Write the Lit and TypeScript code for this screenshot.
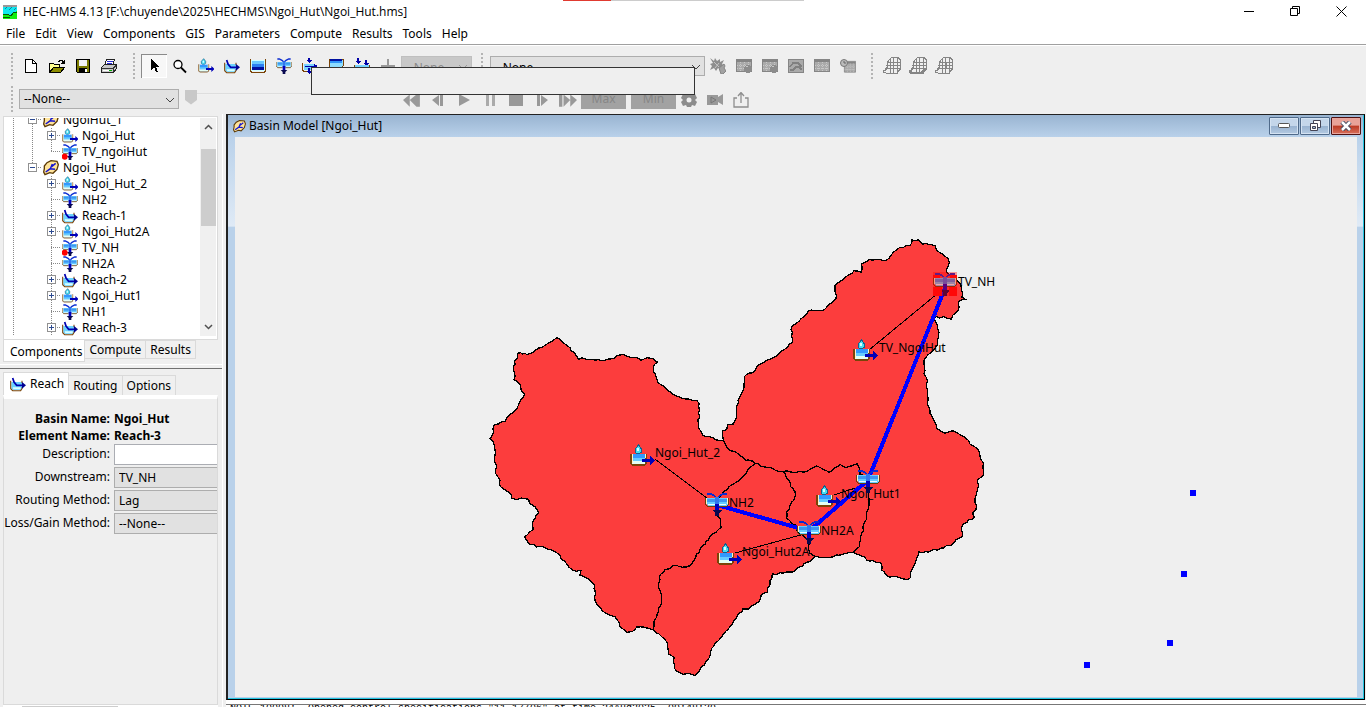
import { LitElement, html, svg, css, nothing } from "lit";
import { customElement } from "lit/decorators.js";

type Pt = [number, number];

/* ---------- shared glyphs, drawn on a 24 unit grid ---------- */

const junction = () => svg`
  <path d="M1 6v6l2 2h7V6z" fill="#66ccff"/><path d="M2 7h8v3H2z" fill="#3c96f0"/>
  <path d="M14 6v8h7l2-2V6z" fill="#66ccff"/><path d="M14 7h8v3h-8z" fill="#3c96f0"/>
  <path d="M3 12h7v1H3zM14 12h7v1h-7z" fill="#e8ffff"/>
  <path d="M.5 6v6.500l2 2H10M23.500 6v6.500l-2 2H14" fill="none" stroke="#6b3d08" stroke-width="1.200"/>
  <path d="M1.500 6v6M22.500 6v6" stroke="#fff2c8" fill="none"/>
  <path d="M2 1.500h3l4 2 3 3 3-3 4-2h3" fill="none" stroke="#0a2ad0" stroke-width="2"/>
  <path d="M10 5h4v9h-4z" fill="#3078f0"/><path d="M10 12h4v7h-4z" fill="#0000c0"/>
  <path d="M7 18h10l-3 3v3h-4v-3z" fill="#080850"/>`;

const subbasin = () => svg`
  <path d="M8.500 1l3 4v3l-2 1.500h-3L5 8V5z" fill="#48dcf0" stroke="#14608c"/><path d="M7 4h2v3H7z" fill="#d8ffff"/>
  <path d="M2 10h13v10H2z" fill="#3399ff"/><path d="M2 14h13v3H2z" fill="#66ccff"/><path d="M2 17h13v3H2z" fill="#e4fff4"/>
  <path d="M1 9.500v10l1.500 1.500h12l1.500-1.500v-10" fill="none" stroke="#7a4408" stroke-width="1.200"/>
  <path d="M2 10v9M15 10v4" stroke="#fff2c8"/>
  <path d="M12 15h8v-3l5 4.500-5 4.500v-3h-8z" fill="#0000b8"/>`;

const reach = () => svg`
  <path d="M2 9h16v9l-2 3H5l-3-2z" fill="#6cd2ff"/><path d="M4 17h12v3H5z" fill="#d8ffff"/>
  <path d="M1 7v12l3 3h12l2-3v-2M18 11V7" fill="none" stroke="#7a4408" stroke-width="1.600"/>
  <path d="M4 3l2 6 4 5h10" fill="none" stroke="#0000b0" stroke-width="2.600"/>
  <path d="M18 9l6 5-6 5z" fill="#000090"/>`;

const basinGlyph = () => svg`
  <path d="M2 9l4-5 6-3 9 1 2 5-2 7-6 6-5-1-7 3-2-4 1-5z" fill="#ffe49a" stroke="#5c3a06" stroke-width="2"/>
  <path d="M4 18l7-5 3-7M11 13l7 1M13 10l6-5" stroke="#1414d0" stroke-width="2.200" fill="none"/>`;

const gage = () => svg`${junction()}<circle cx="4" cy="19" r="4.500" fill="#ff0000"/>`;

const glyph24 = (body: unknown, size = 16) =>
  html`<svg width=${size} height=${size} viewBox="0 0 24 24" aria-hidden="true">${body}</svg>`;

const glyph16 = (body: unknown, crisp = true, size = 16) =>
  html`<svg width=${size} height=${size} viewBox="0 0 16 16" aria-hidden="true"
    shape-rendering=${crisp ? "crispEdges" : "auto"}>${body}</svg>`;

/* ---------- toolbar pictures, 16 unit grid ---------- */

const icons = {
  create: svg`<path d="M2.500 1.500h7l4 4v9h-11z" fill="#fff" stroke="#000"/><path d="M9.500 1.500v4h4" fill="none" stroke="#000"/>`,
  open: svg`<path d="M.5 13.500v-8h4l1 1h5v3" fill="#ffff90" stroke="#000"/><path d="M.5 14.500l4-5h11l-4 5z" fill="#8c8c00" stroke="#000"/><path d="M9 3.500h1v-1h3v1h1v2M12 5.500h4M13 4.500h3M15.500 2v3" fill="none" stroke="#000"/>`,
  save: svg`<path d="M1.500 1.500h13v13h-12l-1-1z" fill="#7c7c00" stroke="#000"/><path d="M4 2h8v6H4z" fill="#f4f4f4"/><path d="M4 10h8v5H4z" fill="#000"/><path d="M10 11h2v3h-2z" fill="#fff"/>`,
  print: svg`<path d="M5.500 1.500h8l-2 6h-8z" fill="#fff" stroke="#222"/><path d="M6 3h6M6 5h5" stroke="#2828d8"/><path d="M.5 9.500l3-3h12v4l-3 4H.5z" fill="#c8c8c8" stroke="#222"/><path d="M1 10.500h11l3-3M12.500 10v4" stroke="#333" fill="none"/><path d="M2 12h9v1H2z" fill="#fff"/><path d="M8 12h3v1H8z" fill="#00b000"/>`,
  arrow: svg`<path d="M5 1v11l3-3 2 5h2l-2-5h3z" fill="#000"/>`,
  zoom: svg`<circle cx="6" cy="6.500" r="4" fill="#fff" stroke="#000" stroke-width="1.300"/><path d="M9 9.500l5 5" stroke="#000" stroke-width="1.800"/>`,
  reservoir: svg`<path d="M1 2h14v11H1z" fill="#d0ffff"/><path d="M2 3h12v3H2z" fill="#68c8ff"/><path d="M2 6h12v3H2z" fill="#2c80f0"/><path d="M2 9h12v3H2z" fill="#0010a0"/><path d="M.5 1v12l1 1h13l1-1V1" fill="none" stroke="#7a4408"/>`,
  diversion: svg`<path d="M2 6h11v6H2z" fill="#78d4ff"/><path d="M.5 5v7l1 1h3M10 13h3" fill="none" stroke="#7a4408"/><path d="M6 0v2H4l3 3 3-3H8V0zM3 8h9V6l4 2-4 3V9H3zM6 10v3H4l3 3 3-3H8v-3z" fill="#0000a8"/>`,
  source: svg`<path d="M1 1h14v7l-2 2H3L1 8z" fill="#8cdcff" stroke="#7a4408"/><path d="M2 1h12v2H2z" fill="#0010a0"/><path d="M2 3h12v2H2z" fill="#3094f8"/><path d="M7 9h2v5H7z" fill="#0000a8"/>`,
  sink: svg`<path d="M3 0h2v3h2L4 6 1 3h2zM11 2h2v3h2l-3 3-3-3h2z" fill="#0000a8"/><path d="M.5 7v6l2 1h11l2-1V7" fill="#78d4ff" stroke="#7a4408"/>`,
  plus: svg`<path d="M7 1h2v6h6v3H9v5H7v-5H1V7h6z" fill="#999"/>`,
  burst: svg`<path d="M0 0l4 3 1-3 2 3 3-2v3l4-2-2 4 2 2-3 1 1 2-4-1-2 3-2-3-4 2 2-4-2-2 3-1z" fill="#8e8e8e"/><path d="M4 4l6 6M9 5l-4 5" stroke="#c4c4c4"/><path d="M9 10l5-4 1 2-1 2 2 3-3 3h-2z" fill="#a2a2a2" stroke="#858585"/>`,
  table: svg`<path d="M.5 1.500h15v12H.5z" fill="#aaa" stroke="#858585"/><path d="M1 3h14" stroke="#858585" stroke-width="2"/><path d="M1 7.500h14M1 10.500h14M4.500 4v9M8.500 4v9M12.500 4v9" stroke="#c8c8c8" stroke-dasharray="1 1"/>`,
  graph: svg`<path d="M.5 1.500h15v13H.5z" fill="#aaa" stroke="#858585"/><path d="M2 9l3-4h5l4 4M2 12h3l3-3h3l3 3" stroke="#808080" fill="none" stroke-width="1.500"/>`,
  mesh: svg`<path d="M4.500 3.500l3-3h6l2 2v8l-3 4h-9l-3-1v-1l2-1 1-2z" fill="none" stroke="#858585"/><path d="M6.500 2v12M9.500 1v13M12.500 1v13M4 4.500h12M3 7.500h12M2 10.500h13" stroke="#858585"/>`,
  first: svg`<path d="M6 3L0 8l6 6zM12 3L6 8l6 6zM12 3h3v11h-3z" fill="#999"/>`,
  back: svg`<path d="M9 3L2 8l7 6zM10 3h3v11h-3z" fill="#999"/>`,
  play: svg`<path d="M3 2l11 6-11 6z" fill="#999"/>`,
  pause: svg`<path d="M4 2h3v12H4zM10 2h3v12h-3z" fill="#aaa"/>`,
  stop: svg`<path d="M1 1h14v13H1z" fill="#999"/>`,
  next: svg`<path d="M3 3h3v11H3zM7 3l7 5-7 6z" fill="#999"/>`,
  last: svg`<path d="M0 3h3v11H0zM4 3l6 5-6 6zM10 3l6 5-6 6z" fill="#999"/>`,
  gear: svg`<path d="M6 1h4l1 2 3-1 2 4-2 2 2 2-2 4-3-1-1 2H6l-1-2-3 1-2-4 2-2-2-2 2-4 3 1z" fill="#8c8c8c"/><circle cx="8" cy="8" r="2.500" fill="#efefef"/>`,
  camera: svg`<path d="M0 3h11v2l5-3v11l-5-3v3H0z" fill="#999"/><path d="M4 5l5 3-5 3z" fill="none" stroke="#777"/>`,
  share: svg`<path d="M4 6H1v9h14V6h-3" fill="none" stroke="#8e8e8e" stroke-width="1.300"/><path d="M8 11V1M5 4l3-3.500L11 4" fill="none" stroke="#8e8e8e" stroke-width="1.300"/>`,
};
const tableBall = svg`${icons.table}<circle cx="12" cy="11" r="4" fill="#8c8c8c"/><path d="M10 9l2-1" stroke="#c8c8c8"/>`;
const tableClock = svg`<g transform="translate(4 2) scale(.75 .9)">${icons.table}</g><circle cx="4" cy="5" r="3.500" fill="#bbb" stroke="#777"/><path d="M4 3v2h2" stroke="#666" fill="none"/>`;
const meshLow = svg`${icons.mesh}<path d="M0 12l2 2h9l3-3" fill="none" stroke="#858585" stroke-width="2"/>`;
const meshPlus = svg`${icons.mesh}<path d="M9 5h2v6H9z" fill="#858585"/>`;

/* ---------- watershed geometry: each run is an origin plus points in thirds ---------- */

const run = (ox: number, oy: number, flat: number[]): Pt[] => {
  const out: Pt[] = [];
  for (let i = 0; i < flat.length; i += 2) out.push([ox + flat[i] / 3, oy + flat[i + 1] / 3]);
  return out;
};

/* Breaks long segments into short steps so that divides look surveyed. */
const ragged = (pts: Pt[]): string => {
  const out: string[] = [];
  let seed = 7;
  const wob = () => {
    seed = (seed * 1103515245 + 12345) % 2147483648;
    return (seed / 2147483648 - 0.5) * 2;
  };
  pts.forEach(([x, y], i) => {
    out.push(`${x.toFixed(1)},${y.toFixed(1)}`);
    const next = pts[i + 1];
    if (!next) return;
    const steps = Math.floor(Math.hypot(next[0] - x, next[1] - y) / 3);
    for (let s = 1; s < steps; s++) {
      const t = s / steps;
      out.push(`${(x + (next[0] - x) * t + wob()).toFixed(1)},${(y + (next[1] - y) * t + wob()).toFixed(1)}`);
    }
  });
  return out.join(" ");
};

const outline = ragged([
  ...run(480, 320, [113,100,122,98,126,102,136,100,140,104,156,99,176,84,205,70,218,62,230,53,240,58,250,68,270,83,283,97,296,118,306,113,322,119,345,121,376,121,385,117,400,116,412,107,428,103,442,109,460,112,484,121,500,113,518,116,532,126,524,133,520,142,527,165,531,180,545,195,560,208,585,226,600,232,618,237,650,241,657,250,656,280,659,292,653,300,655,318,668,345,690,350,708,360,728,361]),
  ...run(710, 220, [40,660,38,633,50,628,53,614,70,612,80,590,80,560,90,530,102,500,103,470,135,453,142,437,180,418,200,407,220,390,246,368,246,318,268,303,295,272,335,272,378,235,375,195,400,178,432,152,455,158,455,132,480,118,530,120,545,103,570,82,600,77,606,60,625,60,638,72,675,77,688,97,715,115,718,128,708,150,712,158,740,180,752,192,756,232,766,238,748,243,745,270,724,298,700,290,672,293,682,315,685,345,682,375,665,395,645,415,642,460,650,475,652,550,660,580,680,625,705,640,730,632,765,652,780,672,805,690,820,730]),
  ...run(640, 430, [1030,135,1012,150,1012,180,1005,205,1010,230,1000,245,1003,263,985,270,965,290,968,318,940,340,893,360,837,366,830,385,815,420,812,442,795,448,770,440,740,437,725,420,722,398,680,390,665,378,640,368,610,372,580,380,525,380,510,395,475,412,462,425,430,430,397,432,390,465,382,487,370,490,358,515,325,537,308,537,280,575,240,625,215,655,203,690,180,720,165,737,145,730,130,733,103,715,103,683,85,672,83,640,65,620,41,600]),
  ...run(480, 320, [505,925,470,921,455,935,440,937,420,920,417,906,405,890,385,884,368,873,345,840,343,795,322,775,300,765,303,751,278,750,262,735,244,718,240,705,215,690,190,681,170,681,143,666,134,651,148,637,160,628,157,615,165,595,176,577,165,560,148,548,146,538,125,534,108,539,95,534,93,522,72,508,62,500,60,482,46,458,50,440,44,425,46,400,40,365,30,356,40,340,43,315,75,304,80,293,110,266,118,250,134,222,123,210,122,194,102,178,104,122,113,115,113,100]),
]);

const divides = [
  [250,32,262,55,290,68,310,83,345,101,380,112,430,125,500,125,530,108,568,127,600,103,618,114,652,102,660,120,660,135,680,140],
  [345,101,325,118,310,138,275,165,240,200,232,210],
  [230,255,240,265,243,292,215,313,205,330,170,372,163,390,150,407,138,411,110,406,75,418,63,432,60,450,55,468,63,490,64,515,50,560,42,575,41,598],
  [430,125,465,185,462,210,440,245,440,265,465,285,470,300,505,330,510,370,525,380],
  [685,180,687,215,680,260,662,320,658,350,640,368],
].map((flat) => ragged(run(640, 430, flat)));

const mapNodes = [
  { kind: "sub", x: 630, y: 444, label: "Ngoi_Hut_2", lx: 655, ly: 457 },
  { kind: "sub", x: 853, y: 339, label: "TV_NgoiHut", lx: 879, ly: 352 },
  { kind: "sub", x: 816, y: 485, label: "Ngoi_Hut1", lx: 841, ly: 498 },
  { kind: "sub", x: 717, y: 543, label: "Ngoi_Hut2A", lx: 742, ly: 556 },
  { kind: "jun", x: 705, y: 492, label: "NH2", lx: 729, ly: 507 },
  { kind: "jun", x: 797, y: 520, label: "NH2A", lx: 821, ly: 535 },
  { kind: "jun", x: 856, y: 469, label: "", lx: 0, ly: 0 },
  { kind: "out", x: 933, y: 272, label: "TV_NH", lx: 958, ly: 286 },
];

/* ---------- explorer tree ---------- */

type Row = { depth: 1 | 2; icon: () => unknown; label: string; box?: "+" | "-"; last?: boolean; trunk?: boolean };
const rows: Row[] = [
  { depth: 1, icon: basinGlyph, label: "NgoiHut_1", box: "-" },
  { depth: 2, icon: subbasin, label: "Ngoi_Hut", box: "+", trunk: true },
  { depth: 2, icon: gage, label: "TV_ngoiHut", trunk: true, last: true },
  { depth: 1, icon: basinGlyph, label: "Ngoi_Hut", box: "-", last: true },
  { depth: 2, icon: subbasin, label: "Ngoi_Hut_2", box: "+" },
  { depth: 2, icon: junction, label: "NH2" },
  { depth: 2, icon: reach, label: "Reach-1", box: "+" },
  { depth: 2, icon: subbasin, label: "Ngoi_Hut2A", box: "+" },
  { depth: 2, icon: gage, label: "TV_NH" },
  { depth: 2, icon: junction, label: "NH2A" },
  { depth: 2, icon: reach, label: "Reach-2", box: "+" },
  { depth: 2, icon: subbasin, label: "Ngoi_Hut1", box: "+" },
  { depth: 2, icon: junction, label: "NH1" },
  { depth: 2, icon: reach, label: "Reach-3", box: "+" },
];

const guide = (line: boolean, branch = false, box?: string, last = false) => html`
  <svg class="guide" width="19" height="16" viewBox="0 0 19 16" shape-rendering="crispEdges" aria-hidden="true">
    ${line ? svg`<path d="M9.500 0v${last ? 8 : 16}" stroke="#888" stroke-dasharray="1 1"/>` : nothing}
    ${branch ? svg`<path d="M9 7.500h10" stroke="#888" stroke-dasharray="1 1"/>` : nothing}
    ${box ? svg`<rect x="5.500" y="3.500" width="8" height="8" fill="#fff" stroke="#919191"/><path d="M7 7.500h5" stroke="#2c4a90"/>
      ${box === "+" ? svg`<path d="M9.500 5v5" stroke="#2c4a90"/>` : nothing}` : nothing}
  </svg>`;

const tool = (name: string, body: unknown, opts: { g24?: boolean; off?: boolean; on?: boolean; smooth?: boolean; size?: number } = {}) => html`
  <button class="tool ${opts.on ? "on" : ""}" aria-label=${name} ?disabled=${opts.off}>
    ${opts.g24 ? glyph24(body) : glyph16(body, !opts.smooth, opts.size)}
  </button>`;

const combo = (cls: string, label: string, off = false) => html`
  <span class="combo ${cls} ${off ? "off" : ""}">
    <select aria-label=${label} ?disabled=${off}><option>--None--</option></select>
    <svg width="10" height="6" viewBox="0 0 10 6" aria-hidden="true"><path d="M1 1l4 4 4-4" fill="none" stroke="currentColor"/></svg>
  </span>`;

@customElement("app-root")
export class AppRoot extends LitElement {
  static styles = css`
    :host {
      display: grid; grid-template-rows: auto auto auto minmax(0, 1fr);
      height: 100vh; overflow: hidden; position: relative;
      background: #efefef; color: #000;
      font: 12px/16px "Noto Sans", "Open Sans", sans-serif;
    }
    * { box-sizing: border-box; }
    button, select, input { font: inherit; color: inherit; margin: 0; border-radius: 0; }
    button { border: 0; padding: 0; background: none; }
    svg { display: block; flex: none; }

    .title { display: flex; align-items: center; height: 23px; padding: 0 2px; background: #fff; }
    .title h1 { flex: 1; margin: 0 0 0 5px; font: 12px/16px "Open Sans", sans-serif; }
    .sys { width: 46px; height: 20px; display: grid; place-items: center; }
    .progress { position: absolute; top: 0; left: 563px; width: 241px; height: 1px; background: linear-gradient(90deg, #e03a30 48px, #ccc 48px); }
    .menu { display: flex; gap: 10px; height: 22px; padding-left: 6px; background: #fff; border-bottom: 1px solid #a0a0a0; box-shadow: 0 1px #fff; }
    .menu button { height: 21px; }

    .bars { display: flex; flex-direction: column; height: 69px; }
    .bar { display: flex; align-items: center; padding-left: 11px; }
    .bar.one { height: 42px; }
    .bar.two { height: 24px; }
    .grip { width: 2px; height: 26px; flex: none; background: repeating-linear-gradient(#b4b4b4 0 2px, #efefef 2px 4px); }
    .gap-a { margin-right: 5px; }
    .gap-b { margin: 0 6px 0 11px; }
    .gap-c { margin: 0 7px 0 9px; }
    .gap-d { margin: 0 6px 0 10px; }
    .gap-e { margin-right: 6px; }
    .tool { width: 26px; height: 24px; display: grid; place-items: center; flex: none; }
    .two .tool { padding-top: 2px; }
    .tool.on { background: #f7f7f7; box-shadow: inset 1px 1px #8a8a8a, inset -1px -1px #fff; }
    .combo { position: relative; display: block; height: 20px; flex: none; color: #000; }
    .combo select { appearance: none; width: 100%; height: 20px; padding: 0 4px; border: 1px solid #adadad; background: #e1e1e1; opacity: 1; }
    .one .combo select { padding-top: 3px; }
    .combo svg { position: absolute; right: 4px; top: 8px; color: #444; }
    .off select { background: #c8c8c8; color: #8a8a8a; border-color: #bfbfbf; }
    .off svg { color: #999; }
    .w-draw { width: 71px; }
    .w-run { width: 215px; }
    .w-time { width: 160px; }
    .seek { appearance: none; width: 207px; height: 20px; margin: 0 7px 0 6px; background: linear-gradient(#d4d4d4, #fafafa) 0 4px / 100% 2px no-repeat; }
    .seek::-webkit-slider-thumb { appearance: none; width: 12px; height: 15px; background: #c8c8c8; clip-path: polygon(0 0, 100% 0, 100% 70%, 50% 100%, 0 70%); margin-top: -4px; }
    .scale { width: 45px; height: 19px; background: #a2a2a2; color: #868686; margin-right: 5px; }
    .scale.end { margin-right: 0; }
    .tip { position: absolute; left: 311px; top: 67px; width: 384px; height: 28px; border: 1px solid #333; background: #efefef; }

    .body { display: grid; grid-template-columns: 226px minmax(0, 1fr); min-height: 0; }
    .side { display: flex; flex-direction: column; min-height: 0; margin-right: 3px; padding: 2px 4px 0 3px; border-right: 1px solid #fff; }
    .tree { display: flex; height: 223px; flex: none; border: 1px solid #dadada; border-bottom: 0; background: #fff; padding: 1px 1px 3px 0; }
    .list { flex: 1; display: flex; flex-direction: column; justify-content: flex-end; overflow: hidden; margin: 0; padding: 0; list-style: none; }
    .list li { display: flex; align-items: center; height: 16px; flex: none; white-space: nowrap; }
    .list .pic { margin: 0 4px 0 1px; }
    .scroll { width: 16px; display: flex; flex-direction: column; align-items: center; background: #f0f0f0; padding: 6px 0; }
    .thumb { width: 15px; height: 77px; margin: 19px 0 auto; background: #cdcdcd; }
    .tabs { display: flex; flex: none; align-items: flex-start; height: 25px; border-top: 1px solid #dadada; }
    .tabs button { height: 19px; padding: 0 4px; border: 1px solid #dadada; border-left: 0; background: #f0f0f0; line-height: 16px; }
    .tabs button.cur { height: 22px; background: #fff; border-left: 1px solid #dadada; border-top: 0; padding: 2px 2px 0 6px; }
    .split { height: 5px; flex: none; margin: 0 -4px 3px -3px; border-top: 1px solid #fff; border-bottom: 1px solid #707070; }
    .tabs.sub { height: 23px; align-items: flex-end; border-top: 0; }
    .tabs.sub button { height: 20px; padding: 0 4px; border-bottom: 0; }
    .tabs.sub .cur { height: 23px; display: flex; gap: 4px; align-items: center; padding: 0 4px 0 6px; border-top: 1px solid #dadada; }
    .editor { flex: 1; min-height: 0; display: grid; grid-template-columns: 106px minmax(0, 1fr); column-gap: 4px; align-content: start;
      border: 1px solid #dadada; border-top: 4px solid #fff; padding-top: 11px; text-align: right; white-space: nowrap; }
    .editor b { height: 17px; line-height: 17px; }
    .editor .val { text-align: left; }
    .editor label { line-height: 20px; }
    .editor input, .editor select { appearance: none; width: 100%; height: 21px; margin: 0 0 2px; border: 1px solid #abadb3; border-right: 0; padding: 0 4px; background: #fff; }
    .editor select { background: #e1e1e1; border-color: #adadad; }
    .hscroll { height: 2px; flex: none; background: linear-gradient(#cdcdcd, #cdcdcd) 19px 1px / 96px 1px no-repeat, #fff; }

    .work { display: flex; flex-direction: column; min-height: 0; }
    .frame { flex: 1; min-height: 0; display: flex; flex-direction: column; margin-right: 1px;
      border: 1px solid #222; border-left: 2px solid #222; border-right-color: #000; border-bottom-color: #000; box-shadow: inset -1px -1px #22c4e0; }
    .cap { display: flex; align-items: center; height: 22px; flex: none; gap: 1px; margin-right: 1px; padding: 0 2px 0 5px; background: linear-gradient(#99b4d1, #b9d1ea); }
    .cap h2 { flex: 1; margin: 0 0 0 2px; font: inherit; }
    .cap button { width: 30px; height: 18px; display: grid; place-items: center; border: 1px solid #4f6a8a; border-radius: 1px; box-shadow: inset 0 0 0 1px #d4e2f2;
      background: linear-gradient(#c4d6ea 50%, #98b2d0 50%, #b4cae2); }
    .cap .close { border-color: #501010; box-shadow: inset 0 0 0 1px #e8a49c; background: linear-gradient(#e8a298 45%, #bc3a24 50%, #d8705c); }
    .canvas { flex: 1; min-height: 0; overflow: hidden; margin: 0 1px 1px 0; border: solid #b9d1ea; border-width: 0 6px 1px 7px;
      border-image: linear-gradient(#b9d1ea, #dfeaf6 90px, #b9d1ea 91px) 1 / 0 6px 1px 7px; }
    .canvas svg { width: 100%; height: 100%; }
    .node-label { font: 12px "Noto Sans", sans-serif; }
    .gutter { height: 7px; flex: none; padding-top: 4px; background: #fff; }
    .log { height: 3px; overflow: hidden; border-top: 1px solid #777; font: 10px/12px "Liberation Mono", monospace; }
    .log p { margin: -2px 0 0 4px; white-space: pre; }
  `;

  render() {
    return html`
      <header class="title">
        <svg width="16" height="16" viewBox="0 0 16 16" shape-rendering="crispEdges" aria-hidden="true">
          <path d="M1 2h14v12H1z" fill="#10e8f0"/><path d="M1 1h14v2H1z" fill="#999"/><path d="M3 5l2-2M7 6l3-3M12 6l2-2" stroke="#1080a0"/>
          <path d="M1 11l4-1 4 2 3-4 3-1v8H1z" fill="#10f010"/><path d="M1 10h4l4 2 3-4h3M1 14l3-1 4 1" fill="none" stroke="#065806"/>
        </svg>
        <h1>HEC-HMS 4.13 [F:\\chuyende\\2025\\HECHMS\\Ngoi_Hut\\Ngoi_Hut.hms]</h1>
        <button class="sys" aria-label="Minimize"><svg width="11" height="11"><path d="M0 5.500h10" stroke="#000"/></svg></button>
        <button class="sys" aria-label="Restore"><svg width="11" height="11"><path d="M.5 2.500h7v7h-7zM2.500 2V.5h7v7H8" fill="none" stroke="#000"/></svg></button>
        <button class="sys" aria-label="Close"><svg width="11" height="11"><path d="M.5.5l10 10M10.500.5l-10 10" stroke="#000"/></svg></button>
      </header>
      <nav class="menu">
        ${["File", "Edit", "View", "Components", "GIS", "Parameters", "Compute", "Results", "Tools", "Help"].map((m) => html`<button>${m}</button>`)}
      </nav>
      <section class="bars">
        <div class="bar one">
          <span class="grip gap-a"></span>
          ${tool("New", icons.create)}${tool("Open", icons.open)}${tool("Save", icons.save)}${tool("Print", icons.print)}
          <span class="grip gap-b"></span>
          ${tool("Select", icons.arrow, { on: true })}${tool("Zoom", icons.zoom, { smooth: true })}
          ${tool("Subbasin", subbasin(), { g24: true })}${tool("Reach", reach(), { g24: true })}
          ${tool("Reservoir", icons.reservoir)}${tool("Junction", junction(), { g24: true })}
          ${tool("Diversion", icons.diversion)}${tool("Source", icons.source)}${tool("Sink", icons.sink)}
          ${tool("Add", icons.plus, { off: true })}
          ${combo("w-draw", "Drawing layer", true)}
          <span class="grip gap-c"></span>
          ${combo("w-run", "Simulation")}
          ${tool("Compute", icons.burst, { off: true, smooth: true })}${tool("Summary", tableBall, { off: true })}${tool("Element summary", tableBall, { off: true })}
          ${tool("Graph", icons.graph, { off: true })}${tool("Table", icons.table, { off: true })}${tool("Time series", tableClock, { off: true, smooth: true })}
          <span class="grip gap-d"></span>
          ${tool("Grid", icons.mesh, { off: true, size: 18 })}${tool("Grid edges", meshLow, { off: true, size: 18 })}${tool("Grid points", meshPlus, { off: true, size: 18 })}
        </div>
        <div class="bar two">
          <span class="grip gap-e"></span>
          ${combo("w-time", "Animation")}
          <input class="seek" type="range" min="0" max="100" value="0" aria-label="Time" />
          ${tool("First", icons.first, { smooth: true, size: 18 })}${tool("Step back", icons.back, { smooth: true })}${tool("Play", icons.play, { smooth: true })}
          ${tool("Pause", icons.pause)}${tool("Stop", icons.stop)}${tool("Step forward", icons.next, { smooth: true })}${tool("Last", icons.last, { smooth: true, size: 18 })}
          <button class="scale" disabled>Max</button><button class="scale end" disabled>Min</button>
          ${tool("Settings", icons.gear, { smooth: true })}${tool("Record", icons.camera, { smooth: true })}${tool("Export", icons.share, { smooth: true })}
        </div>
      </section>
      <main class="body">
        <aside class="side">
          <div class="tree">
            <ul class="list">
              ${rows.map((r) => html`<li>
                ${guide(true)}
                ${r.depth === 1 ? guide(true, true, r.box, r.last) : html`${guide(!!r.trunk)}${guide(true, true, r.box, r.last)}`}
                <span class="pic">${glyph24(r.icon())}</span>${r.label}
              </li>`)}
            </ul>
            <div class="scroll">
              <svg width="9" height="6" viewBox="0 0 9 6"><path d="M1 5l3.500-3.500L8 5" fill="none" stroke="#505050" stroke-width="1.500"/></svg>
              <div class="thumb"></div>
              <svg width="9" height="6" viewBox="0 0 9 6"><path d="M1 1l3.500 3.500L8 1" fill="none" stroke="#505050" stroke-width="1.500"/></svg>
            </div>
          </div>
          <div class="tabs"><button class="cur">Components</button><button>Compute</button><button>Results</button></div>
          <div class="split"></div>
          <div class="tabs sub"><button class="cur">${glyph24(reach())}Reach</button><button>Routing</button><button>Options</button></div>
          <form class="editor">
            <b>Basin Name:</b><b class="val">Ngoi_Hut</b>
            <b>Element Name:</b><b class="val">Reach-3</b>
            <label for="desc">Description:</label><input id="desc" />
            <label for="down">Downstream:</label><select id="down"><option>TV_NH</option></select>
            <label for="route">Routing Method:</label><select id="route"><option>Lag</option></select>
            <label for="loss">Loss/Gain Method:</label><select id="loss"><option>--None--</option></select>
          </form>
          <div class="hscroll"></div>
        </aside>
        <section class="work">
          <div class="frame">
            <div class="cap">
              ${glyph24(basinGlyph(), 13)}
              <h2>Basin Model [Ngoi_Hut]</h2>
              <button aria-label="Minimize map"><svg width="12" height="6"><rect x=".5" y=".5" width="11" height="4" rx="1" fill="#fff" stroke="#555"/></svg></button>
              <button aria-label="Restore map"><svg width="13" height="12"><path d="M4.500.5h7v7h-7z" fill="#fff" stroke="#445"/><path d="M1.500 3.500h7v7h-7z" fill="#fff" stroke="#445"/><path d="M3.500 6.500h3v2h-3z" fill="#9ab4d2" stroke="#445"/></svg></button>
              <button class="close" aria-label="Close map"><svg width="12" height="10"><path d="M2 1l8 8M10 1l-8 8" stroke="#444c60" stroke-width="4.500"/><path d="M2 1l8 8M10 1l-8 8" stroke="#fff" stroke-width="2.500"/></svg></button>
            </div>
            <div class="canvas">
              <svg shape-rendering="crispEdges" role="img" aria-label="Basin map">
                <g transform="translate(-235 -137)">
                  <polygon points=${outline} fill="#fc3d3d" stroke="#000" stroke-width="1.300"/>
                  ${divides.map((d) => svg`<polyline points=${d} fill="none" stroke="#000" stroke-width="1.300"/>`)}
                  <path d="M655 459L708 499M869 350L943 289M735 553L808 533M834 495L868 484" stroke="#000"/>
                  <path d="M717 505L809 531L868 480L945 288" fill="none" stroke="#0000ff" stroke-width="4"/>
                  ${mapNodes.map((n) => svg`
                    <g transform="translate(${n.x} ${n.y})">
                      ${n.kind === "sub" ? subbasin() : junction()}
                      ${n.kind === "out" ? svg`<path d="M0 0h24v24H0z" fill="#ff0000" opacity=".35"/><path d="M0 15h9v9H0zM16 15h8v9h-8zM0 3h7v3H0zM17 3h7v3h-7z" fill="#ff0808"/>` : nothing}
                    </g>
                    ${n.label ? svg`<text class="node-label" x=${n.lx} y=${n.ly}>${n.label}</text>` : nothing}`)}
                  <path d="M1190 490h6v6h-6zM1181 571h6v6h-6zM1167 640h6v6h-6zM1084 662h6v6h-6z" fill="#0000ff"/>
                </g>
              </svg>
            </div>
          </div>
          <div class="gutter"><div class="log"><p>NOTE 10008:  Opened control specifications "11-17/06" at time 24Aug2025, 09:48:39.</p></div></div>
        </section>
      </main>
      <div class="progress"></div>
      <div class="tip" role="tooltip"></div>
    `;
  }
}
